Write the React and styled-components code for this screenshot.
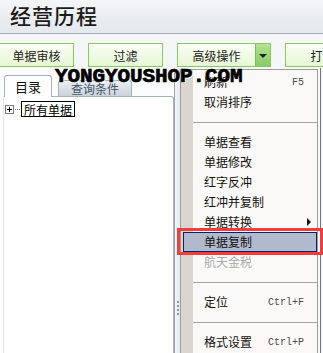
import React from "react";
import styled, { createGlobalStyle } from "styled-components";

const GlobalStyle = createGlobalStyle`
  html, body {
    margin: 0;
    padding: 0;
    background: #ffffff;
  }
`;

const CJK = `"Noto Sans CJK SC", "Liberation Sans", sans-serif`;

const toolButtons = [
  { label: "单据审核", width: 75 },
  { label: "过滤", width: 75 },
  { label: "高级操作", width: 94, split: true },
  { label: "打印", width: 75 },
];

const menuItems = [
  { label: "刷新", key: "F5" },
  { label: "取消排序" },
  { sep: true },
  { label: "单据查看" },
  { label: "单据修改" },
  { label: "红字反冲" },
  { label: "红冲并复制" },
  { label: "单据转换", sub: true },
  { label: "单据复制", active: true },
  { label: "航天金税", disabled: true },
  { sep: true },
  { label: "定位", key: "Ctrl+F" },
  { sep: true },
  { label: "格式设置", key: "Ctrl+P" },
];

export default function App() {
  return (
    <>
      <GlobalStyle />
      <Page>
        <TitleBar>
          <Title>经营历程</Title>
        </TitleBar>

        <Toolbar>
          {toolButtons.map((b) => (
            <ToolButton key={b.label} $w={b.width}>
              <ButtonLabel>{b.label}</ButtonLabel>
              {b.split && (
                <SplitArrow>
                  <DownTriangle />
                </SplitArrow>
              )}
            </ToolButton>
          ))}
        </Toolbar>

        <Body>
          <LeftPane>
            <TabRow>
              <Tab $active>目录</Tab>
              <Tab>查询条件</Tab>
            </TabRow>
            <TreePanel>
              <TreeRow>
                <Expander>
                  <svg width="9" height="9" viewBox="0 0 9 9">
                    <rect x="0.5" y="0.5" width="8" height="8" fill="#fff" stroke="#7a7a7a" />
                    <path d="M2 4.5h5M4.5 2v5" stroke="#000" strokeWidth="1" />
                  </svg>
                </Expander>
                <Dots />
                <TreeLabel>所有单据</TreeLabel>
              </TreeRow>
            </TreePanel>
          </LeftPane>

          <Splitter>
            <Grip />
          </Splitter>

          <GridArea>
            <GridLine />
          </GridArea>
        </Body>

        <Menu>
          <IconStrip />
          {menuItems.map((item, i) =>
            item.sep ? (
              <Separator key={i} />
            ) : (
              <MenuItem key={i} $active={item.active} $disabled={item.disabled}>
                <MenuText>{item.label}</MenuText>
                {item.key && <Shortcut>{item.key}</Shortcut>}
                {item.sub && <SubArrow />}
              </MenuItem>
            )
          )}
        </Menu>

        <Highlight />
        <Watermark>YONGYOUSHOP.COM</Watermark>
      </Page>
    </>
  );
}

const Page = styled.div`
  position: relative;
  width: 323px;
  height: 353px;
  overflow: hidden;
  background: #fbfcfd;
  font-family: ${CJK};
`;

const TitleBar = styled.div`
  height: 33px;
  display: flex;
  align-items: center;
  padding-left: 10px;
  background: linear-gradient(#f3f5f7, #e4e8ec);
  border-bottom: 1px solid #a3acb5;
  box-shadow: 0 1px 0 #ffffff;
`;

const Title = styled.div`
  font-size: 21px;
  font-weight: 500;
  color: #1b1b1b;
  letter-spacing: 1px;
  line-height: 1;
  margin-top: -2px;
`;

const Toolbar = styled.div`
  height: 24px;
  padding-top: 9px;
  padding-bottom: 1px;
  margin-left: -1px;
  display: flex;
  gap: 14px;
  background: #f4f6f8;
`;

const ToolButton = styled.div`
  flex: none;
  width: ${({ $w }) => $w}px;
  height: 24px;
  box-sizing: border-box;
  display: flex;
  border: 1px solid #86cc5c;
  background: linear-gradient(#fbfff6, #e6f6d4);
  color: #222;
  font-size: 12px;
`;

const ButtonLabel = styled.span`
  flex: 1;
  display: flex;
  align-items: center;
  justify-content: center;
  padding-top: 1px;
`;

const SplitArrow = styled.span`
  width: 14px;
  display: flex;
  align-items: center;
  justify-content: center;
  border-left: 1px solid #7cc052;
  background: linear-gradient(#b6e294, #88c962);
`;

const DownTriangle = styled.span`
  width: 0;
  height: 0;
  border-left: 4px solid transparent;
  border-right: 4px solid transparent;
  border-top: 4px solid #222;
  margin-top: 2px;
`;

const Body = styled.div`
  display: flex;
  height: 285px;
`;

const LeftPane = styled.div`
  width: 174px;
  display: flex;
  flex-direction: column;
  background: #ffffff;
`;

const TabRow = styled.div`
  height: 28px;
  display: flex;
  align-items: flex-end;
  gap: 6px;
  padding-left: 4px;
  background: #fbfcfd;
`;

const Tab = styled.div`
  box-sizing: border-box;
  height: ${({ $active }) => ($active ? 22 : 16)}px;
  width: ${({ $active }) => ($active ? 48 : 74)}px;
  margin-bottom: ${({ $active }) => ($active ? -1 : 0)}px;
  display: flex;
  align-items: center;
  justify-content: center;
  font-size: ${({ $active }) => ($active ? 13 : 12)}px;
  color: ${({ $active }) => ($active ? "#111" : "#3f5468")};
  background: ${({ $active }) =>
    $active ? "#ffffff" : "linear-gradient(#eaeef1, #cbd3da)"};
  border: 1px solid #a6b2bd;
  border-bottom: none;
  border-radius: 3px 3px 0 0;
  position: relative;
  z-index: ${({ $active }) => ($active ? 1 : 0)};
`;

const TreePanel = styled.div`
  flex: 1;
  margin-left: 3px;
  border-top: 1px solid #a6b2bd;
  border-right: 1px solid #a6b2bd;
  border-left: 1px solid #e4e8ec;
  border-top-right-radius: 3px;
  background: #ffffff;
  padding: 4px 0 0 1px;
`;

const TreeRow = styled.div`
  display: flex;
  align-items: center;
  height: 16px;
`;

const Expander = styled.span`
  display: flex;
  width: 9px;
  height: 9px;
`;

const Dots = styled.span`
  width: 5px;
  margin: 0 1px 0 1px;
  border-top: 1px dotted #8a8a8a;
`;

const TreeLabel = styled.span`
  box-sizing: border-box;
  height: 16px;
  padding: 0 2px;
  display: flex;
  align-items: center;
  border: 1px solid #000;
  font-size: 12px;
  color: #000;
`;

const Splitter = styled.div`
  width: 6px;
  display: flex;
  flex-direction: column;
  justify-content: flex-end;
  align-items: center;
  padding-bottom: 38px;
  box-sizing: border-box;
  border-left: 1px solid #98a3ae;
  background: linear-gradient(90deg, #f2f4f6, #e6eaee);
`;

const Grip = styled.span`
  width: 2px;
  height: 14px;
  background: repeating-linear-gradient(#8e98a2 0 2px, transparent 2px 4px);
`;

const GridArea = styled.div`
  flex: 1;
  display: flex;
  justify-content: flex-end;
  padding-right: 2px;
  background: #f7f8f9;
`;

const GridLine = styled.span`
  width: 1px;
  background: #6f757b;
`;

const Menu = styled.div`
  position: absolute;
  left: 180px;
  top: 69px;
  width: 138px;
  height: 300px;
  box-sizing: border-box;
  padding-top: 2px;
  border: 1px solid #9c9c9c;
  background: #faf9f7;
  display: flex;
  flex-direction: column;
`;

const IconStrip = styled.span`
  position: absolute;
  left: 0;
  top: 0;
  bottom: 0;
  width: 12px;
  background: #d9d6cf;
`;

const MenuItem = styled.div`
  position: relative;
  height: 20px;
  flex: none;
  box-sizing: border-box;
  margin: 0 0 0 2px;
  padding: 0 12px 0 20px;
  display: flex;
  align-items: center;
  justify-content: space-between;
  font-size: 12px;
  color: ${({ $disabled }) => ($disabled ? "#a9a9a9" : "#111")};
  text-shadow: ${({ $disabled }) => ($disabled ? "1px 1px 0 #ffffff" : "none")};
  background: ${({ $active }) => ($active ? "#b1b9cd" : "transparent")};
  border: 1px solid ${({ $active }) => ($active ? "#0b2364" : "transparent")};
`;

const MenuText = styled.span`
  line-height: 1;
`;

const Shortcut = styled.span`
  font-family: "Liberation Mono", "DejaVu Sans Mono", monospace;
  font-size: 10px;
  color: #4a4a4a;
`;

const SubArrow = styled.span`
  width: 0;
  height: 0;
  margin-right: -7px;
  border-top: 4px solid transparent;
  border-bottom: 4px solid transparent;
  border-left: 4px solid #111;
`;

const Separator = styled.div`
  position: relative;
  height: 20px;
  flex: none;
  margin-left: 12px;
  display: flex;
  align-items: center;

  &::after {
    content: "";
    flex: 1;
    height: 1px;
    background: #a4a4a4;
  }
`;

const Highlight = styled.div`
  position: absolute;
  left: 177px;
  top: 228px;
  width: 146px;
  height: 27px;
  box-sizing: border-box;
  border: 3px solid #f23d3d;
  pointer-events: none;
`;

const Watermark = styled.div`
  position: absolute;
  left: 55px;
  top: 66px;
  font-family: "Liberation Mono", "DejaVu Sans Mono", monospace;
  font-weight: 700;
  font-size: 21px;
  line-height: 1;
  color: #000;
  letter-spacing: -0.1px;
  -webkit-text-stroke: 0.7px #000;
  text-shadow: 1px 1px 0 #ffffff;
  pointer-events: none;
`;
